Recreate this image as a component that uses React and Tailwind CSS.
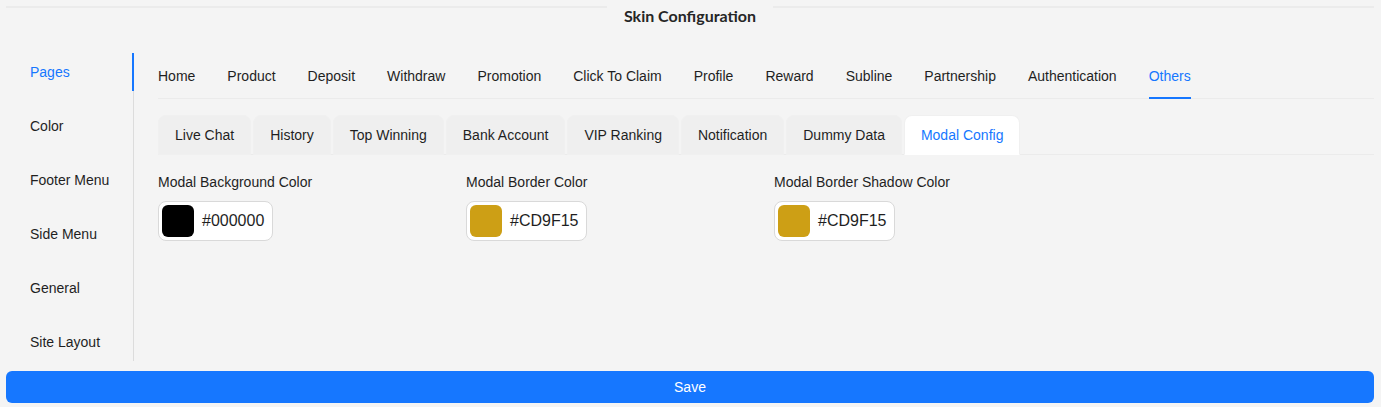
import { useState } from "react";

const SIDE = ["Pages", "Color", "Footer Menu", "Side Menu", "General", "Site Layout"];
const TOP = ["Home", "Product", "Deposit", "Withdraw", "Promotion", "Click To Claim", "Profile", "Reward", "Subline", "Partnership", "Authentication", "Others"];
const CARDS = ["Live Chat", "History", "Top Winning", "Bank Account", "VIP Ranking", "Notification", "Dummy Data", "Modal Config"];
const FIELDS = [
  { label: "Modal Background Color", value: "#000000" },
  { label: "Modal Border Color", value: "#CD9F15" },
  { label: "Modal Border Shadow Color", value: "#CD9F15" },
];

export default function App() {
  const [side, setSide] = useState("Pages");
  const [top, setTop] = useState("Others");
  const [card, setCard] = useState("Modal Config");

  return (
    <div className="min-h-screen bg-[#f4f4f4] pl-[6px] pr-[7px] text-[14px] text-[#1f1f1f]" style={{ fontFamily: '"Liberation Sans", Arial, sans-serif' }}>
      {/* title divider */}
      <div className="flex items-start">
        <div className="mt-[6px] flex-1 border-t-2 border-[#ebebeb]" />
        <div className="px-[17px] pt-[5px] text-[16px] font-bold leading-[22px] text-[#262626]" style={{ fontFamily: "Lato, sans-serif" }}>Skin Configuration</div>
        <div className="mt-[6px] flex-1 border-t-2 border-[#ebebeb]" />
      </div>

      <div className="mt-[26px] flex">
        {/* vertical tabs */}
        <div className="flex w-[128px] shrink-0 flex-col gap-4 border-r border-[#dcdcdc]">
          {SIDE.map((s) => (
            <button key={s} onClick={() => setSide(s)} className={`relative whitespace-nowrap px-6 py-2 text-left leading-[22px] ${side === s ? "text-[#1677ff]" : ""}`}>
              {s}
              {side === s && <span className="absolute right-[-1px] top-0 h-full w-[2px] bg-[#1677ff]" />}
            </button>
          ))}
        </div>

        <div className="min-w-0 flex-1 pl-6">
          {/* page tabs */}
          <div className="mb-4 flex gap-8 shadow-[inset_0_-1px_0_#ebebeb]">
            {TOP.map((t) => (
              <button key={t} onClick={() => setTop(t)} className={`relative whitespace-nowrap py-3 leading-[22px] ${top === t ? "text-[#1677ff]" : ""}`}>
                {t}
                {top === t && <span className="absolute bottom-0 left-0 h-[2px] w-full bg-[#1677ff]" />}
              </button>
            ))}
          </div>

          {/* card tabs */}
          <div className="mb-4 flex gap-[2px] shadow-[inset_0_-1px_0_#ebebeb]">
            {CARDS.map((c) => (
              <button
                key={c}
                onClick={() => setCard(c)}
                className={`whitespace-nowrap rounded-t-lg border px-4 py-2 leading-[22px] ${card === c ? "border-[#f0f0f0] border-b-white bg-white text-[#1677ff]" : "border-[#f0f0f0] bg-[#efefef]"}`}
              >
                {c}
              </button>
            ))}
          </div>

          {/* color fields */}
          <div className="flex">
            {FIELDS.map((f) => (
              <div key={f.label} className="w-[308px]">
                <div className="pb-2 leading-[22px]">{f.label}</div>
                <div className="inline-flex h-10 items-center gap-2 rounded-lg border border-[#d9d9d9] bg-white p-[3px] pr-[8px]">
                  <span className="h-8 w-8 rounded-md" style={{ background: f.value }} />
                  <span className="text-[16px]">{f.value}</span>
                </div>
              </div>
            ))}
          </div>
        </div>
      </div>

      <button className="mt-[10px] h-8 w-full rounded-md bg-[#1677ff] text-[14px] text-white">Save</button>
    </div>
  );
}
